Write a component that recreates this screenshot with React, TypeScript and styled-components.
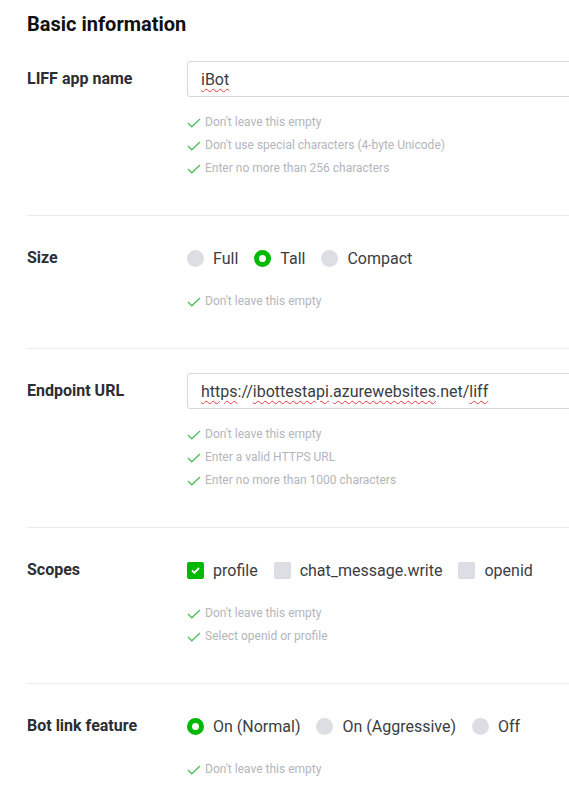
import styled, { createGlobalStyle } from "styled-components";

const GlobalStyle = createGlobalStyle`
  html, body {
    margin: 0;
    padding: 0;
    background: #ffffff;
    overflow: hidden;
  }
  body {
    font-family: Roboto, "Liberation Sans", sans-serif;
    -webkit-font-smoothing: antialiased;
  }
`;

const Viewport = styled.div`
  width: 569px;
  overflow: hidden;
`;

const Page = styled.div`
  width: 820px;
  padding: 12px 0 0 27px;
  box-sizing: border-box;
`;

const Title = styled.h2`
  margin: 0 0 1px;
  font-size: 20px;
  line-height: 24px;
  font-weight: 700;
  color: #111111;
`;

const Section = styled.section`
  display: grid;
  grid-template-columns: 160px 1fr;
  padding: 24px 0 35px;
  border-bottom: 1px solid #e9eaec;

  &:last-child {
    border-bottom: none;
  }
`;

const Label = styled.div`
  font-size: 16px;
  font-weight: 700;
  line-height: 36px;
  color: #2b2e33;
`;

const Field = styled.div`
  display: flex;
  flex-direction: column;
`;

const TextInput = styled.div`
  height: 36px;
  box-sizing: border-box;
  border: 1px solid #d4d7db;
  border-radius: 3px;
  padding: 0 13px;
  display: flex;
  align-items: center;
  font-size: 16px;
  color: #3a3d42;
`;

const Spell = styled.span`
  text-decoration: underline wavy #e0393e;
  text-decoration-thickness: 1px;
  text-underline-offset: 3px;
`;

const Options = styled.div`
  height: 36px;
  display: flex;
  align-items: center;
  gap: 16px;
`;

const Option = styled.label`
  display: flex;
  align-items: center;
  gap: 9px;
  font-size: 16px;
  color: #3a3d42;
`;

const Radio = styled.span<{ $on?: boolean }>`
  width: 17px;
  height: 17px;
  border-radius: 50%;
  box-sizing: border-box;
  background: ${(p) => (p.$on ? "#ffffff" : "#dcdee3")};
  border: ${(p) => (p.$on ? "5.5px solid #00b900" : "none")};
`;

const Box = styled.span<{ $on?: boolean }>`
  width: 17px;
  height: 17px;
  border-radius: 2px;
  background: ${(p) => (p.$on ? "#00b900" : "#dcdee3")};
  display: flex;
  align-items: center;
  justify-content: center;
`;

const Hints = styled.ul`
  list-style: none;
  margin: 14px 0 0;
  padding: 0;
`;

const Hint = styled.li`
  display: flex;
  align-items: center;
  gap: 4px;
  font-size: 12px;
  line-height: 23px;
  color: #b2b6bd;
`;

const Check = () => (
  <svg width="14" height="10" viewBox="0 0 14 10" fill="none">
    <path d="M1 5l3.8 3.8L13 1" stroke="#4cbf5b" strokeWidth="1.3" />
  </svg>
);

const Tick = () => (
  <svg width="9" height="7" viewBox="0 0 9 7" fill="none">
    <path d="M1 3.5l2.3 2.3L8 1" stroke="#ffffff" strokeWidth="1.8" />
  </svg>
);

function HintList({ items }: { items: string[] }) {
  return (
    <Hints>
      {items.map((t) => (
        <Hint key={t}>
          <Check />
          {t}
        </Hint>
      ))}
    </Hints>
  );
}

export default function App() {
  return (
    <Viewport>
      <GlobalStyle />
      <Page>
        <Title>Basic information</Title>

        <Section>
          <Label>LIFF app name</Label>
          <Field>
            <TextInput>
              <Spell>iBot</Spell>
            </TextInput>
            <HintList
              items={[
                "Don't leave this empty",
                "Don't use special characters (4-byte Unicode)",
                "Enter no more than 256 characters",
              ]}
            />
          </Field>
        </Section>

        <Section>
          <Label>Size</Label>
          <Field>
            <Options>
              <Option>
                <Radio />
                Full
              </Option>
              <Option>
                <Radio $on />
                Tall
              </Option>
              <Option>
                <Radio />
                Compact
              </Option>
            </Options>
            <HintList items={["Don't leave this empty"]} />
          </Field>
        </Section>

        <Section>
          <Label>Endpoint URL</Label>
          <Field>
            <TextInput>
              <Spell>https</Spell>://<Spell>ibottestapi</Spell>.
              <Spell>azurewebsites</Spell>.net/<Spell>liff</Spell>
            </TextInput>
            <HintList
              items={[
                "Don't leave this empty",
                "Enter a valid HTTPS URL",
                "Enter no more than 1000 characters",
              ]}
            />
          </Field>
        </Section>

        <Section>
          <Label>Scopes</Label>
          <Field>
            <Options>
              <Option>
                <Box $on>
                  <Tick />
                </Box>
                profile
              </Option>
              <Option>
                <Box />
                chat_message.write
              </Option>
              <Option>
                <Box />
                openid
              </Option>
            </Options>
            <HintList
              items={["Don't leave this empty", "Select openid or profile"]}
            />
          </Field>
        </Section>

        <Section>
          <Label>Bot link feature</Label>
          <Field>
            <Options>
              <Option>
                <Radio $on />
                On (Normal)
              </Option>
              <Option>
                <Radio />
                On (Aggressive)
              </Option>
              <Option>
                <Radio />
                Off
              </Option>
            </Options>
            <HintList items={["Don't leave this empty"]} />
          </Field>
        </Section>
      </Page>
    </Viewport>
  );
}
